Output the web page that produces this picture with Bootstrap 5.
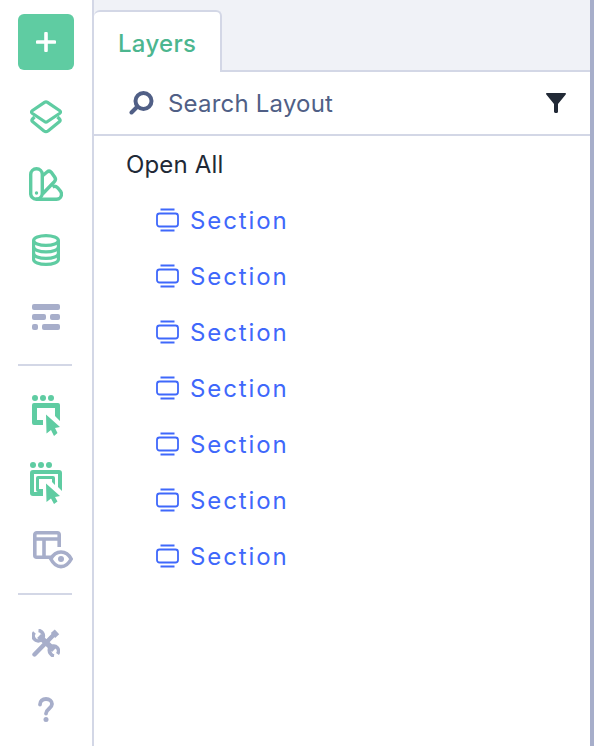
<!doctype html>
<html lang="en">
<head>
<meta charset="utf-8">
<title>Layers</title>
<link href="https://cdn.jsdelivr.net/npm/bootstrap@5.3.0/dist/css/bootstrap.min.css" rel="stylesheet">
<style>
html,body{height:100%;overflow:hidden}
body{font-family:Inter,"Liberation Sans",sans-serif;background:#fff}
.shell{width:594px;height:746px}
.rail{width:94px;flex:none;border-right:2px solid #d3d7e6;padding:14px 20px 0 18px}
.add-tile{width:56px;height:56px;background:#5fcca2;border-radius:6px;margin-bottom:13.67px;border:0;padding:0}
.rail-slot{height:66.67px;width:56px}
.rail-rule{width:54px;height:2px;background:#d3d7e6;flex:none}
.rule-a{margin:13.7px 0 16.7px}
.rule-b{margin:10.7px 0 15px}
.slot-low{height:66px}
.eye-shift{margin:2px 0 0 14px}
.cursor-mark{paint-order:stroke;stroke:#fff;stroke-width:3px;stroke-linejoin:round}
.pane{border-right:4px solid #a7aeca}
.tabstrip{height:72px;background:#f0f2f7;border-bottom:2px solid #d3d7e6}
.tab-active{width:128px;height:62px;margin-top:10px;background:#fff;border:2px solid #d3d7e6;border-bottom:0;border-left:0;border-radius:6px 6px 0 0;margin-bottom:-2px;color:#4cb68f;font-size:24px;letter-spacing:.3px;font-weight:500;padding-left:24px;line-height:64px}
.searchbar{height:64px;border-bottom:2px solid #d3d7e6;padding:0 24px 0 35px}
.search-label{font-size:24px;letter-spacing:.2px;color:#505f86;margin-left:13px;line-height:1;padding-top:2px}
.open-all{font-size:24px;letter-spacing:.15px;color:#212936;margin:14px 0 0 32px;line-height:30px;height:42px}
.layer-row{height:56px;padding-left:62px;color:#3f68fb;font-size:24px;letter-spacing:1.9px}
.layer-row svg{margin-right:11px}
.row-text{padding-top:1px}
</style>
</head>
<body>
<div class="shell d-flex">
  <aside class="rail d-flex flex-column">
    <button class="add-tile d-flex align-items-center justify-content-center" aria-label="Add">
      <svg width="20" height="20" viewBox="0 0 20 20"><path d="M10 1.500v17M1.500 10h17" stroke="#fff" stroke-width="3.600" stroke-linecap="round"/></svg>
    </button>
    <div class="rail-slot d-flex align-items-center justify-content-center">
      <svg width="32" height="34" viewBox="0 0 32 34" fill="none" stroke="#5fcca2" stroke-width="3.200" stroke-linejoin="round"><path d="M14.500 2.400c1-.7 2-.7 3 0L29.500 10.500c1.300 1 1.300 2 0 3L17.500 21.500c-1 .7-2 .7-3 0L2.500 13.500c-1.300-1-1.300-2 0-3z"/><path d="M4.500 17 2.500 19c-1 1-.8 2 .2 2.800L14 31c1.300.9 2.700.9 4 0l11.300-9.200c1-.8 1.200-1.800.2-2.800L27.500 17"/></svg>
    </div>
    <div class="rail-slot d-flex align-items-center justify-content-center">
      <svg width="34" height="34" viewBox="0 0 34 34" fill="none" stroke="#5fcca2" stroke-width="3.400" stroke-linejoin="round"><path d="M1.700 7.500a5.800 5.800 0 0 1 11.600 0V26a6.300 6.300 0 0 1-6 6.300A5.800 5.800 0 0 1 1.700 26z"/><path d="M13.300 9 18 5c1.500-1.200 3.200-1 4.300.3l3.500 5c1 1.500.8 3.200-.5 4.500L13.500 27"/><path d="M7 32.300h20.500c3.200 0 5-2.800 5-5.200 0-2-1-3.300-2-4.200l-2-2.200c-1.500-1.600-3.500-1.700-5-.7"/><circle cx="7.500" cy="26" r="1.700" fill="#5fcca2" stroke="none"/></svg>
    </div>
    <div class="rail-slot d-flex align-items-center justify-content-center">
      <svg width="28" height="32" viewBox="0 0 28 32" fill="none" stroke="#5fcca2" stroke-width="3.200"><ellipse cx="14" cy="6.500" rx="12.400" ry="4.900"/><path d="M1.600 6.500v19c0 2.700 5.500 4.900 12.400 4.900s12.400-2.200 12.400-4.900v-19"/><path d="M1.600 13c0 2.700 5.500 4.900 12.400 4.900S26.400 15.700 26.400 13M1.600 19.500c0 2.700 5.500 4.900 12.400 4.900s12.400-2.200 12.400-4.900"/></svg>
    </div>
    <div class="rail-slot d-flex align-items-center justify-content-center">
      <svg width="28" height="26" viewBox="0 0 28 26" fill="#a7aeca"><rect x="0" y="0" width="28" height="6" rx="2"/><rect x="0" y="10" width="14" height="6" rx="2"/><rect x="18" y="10" width="10" height="6" rx="2"/><rect x="0" y="20" width="6" height="6" rx="2"/><rect x="10" y="20" width="18" height="6" rx="2"/></svg>
    </div>
    <div class="rail-rule rule-a"></div>
    <div class="rail-slot d-flex align-items-center justify-content-center">
      <svg width="28" height="41" viewBox="0 0 28 41"><g fill="#5fcca2"><circle cx="3" cy="3" r="3"/><circle cx="11" cy="3" r="3"/><circle cx="19" cy="3" r="3"/><path d="M2 8h24a2 2 0 0 1 2 2v16l-5-5v-8H5v12h6v5H2a2 2 0 0 1-2-2V10a2 2 0 0 1 2-2z"/><path class="cursor-mark" d="M14 19.500 28 32l-5 1 2.500 5-3.500 3-3-6-4.500 3.500z"/></g></svg>
    </div>
    <div class="rail-slot d-flex align-items-center justify-content-center">
      <svg width="32" height="42" viewBox="0 0 32 42"><g fill="#5fcca2"><circle cx="3" cy="3" r="3"/><circle cx="11" cy="3" r="3"/><circle cx="19" cy="3" r="3"/><path d="M3 8h26a3 3 0 0 1 3 3v18l-4-4V12H4v18h9v4H3a3 3 0 0 1-3-3V11a3 3 0 0 1 3-3z"/><path d="M8 14h15a2 2 0 0 1 2 2v7l-3-3v-3H9v10h4v3H8a2 2 0 0 1-2-2V16a2 2 0 0 1 2-2z"/><path class="cursor-mark" d="M16 21.500 30 34l-5 1 2.500 4.500-3.500 2.500-3-5.500-4.500 3.500z"/></g></svg>
    </div>
    <div class="rail-slot d-flex align-items-center justify-content-center">
      <svg class="eye-shift" width="40" height="38" viewBox="0 0 40 38" fill="none" stroke="#a7aeca" stroke-width="3.600"><path d="M18 26.200H3.800a2 2 0 0 1-2-2V3.800a2 2 0 0 1 2-2h20.400a2 2 0 0 1 2 2V16M1.800 8H26.200M11 8V26"/><path d="M17.800 28c2.500-4.800 6-7 10.200-7s7.700 2.200 10.200 7c-2.500 4.800-6 7.600-10.200 7.600S20.300 32.800 17.800 28z" fill="#fff"/><circle cx="28" cy="28" r="3" fill="#a7aeca" stroke="none"/></svg>
    </div>
    <div class="rail-rule rule-b"></div>
    <div class="rail-slot slot-low d-flex align-items-center justify-content-center">
      <svg width="28" height="28" viewBox="0 0 28 28" fill="none" stroke="#a7aeca"><path d="M2.500 25.500 22 5.500" stroke-width="4.400" stroke-linecap="round"/><path d="M21 6.500 25 2.800" stroke-width="6.500"/><path d="M7 7 22 21" stroke-width="5.600"/><path d="M2.500 3.500a5 5 0 0 0 6.500 7.500 5 5 0 0 0 1.500-7A5 5 0 0 0 6.500 1.500" stroke-width="3.600"/><path d="M25.500 25a5 5 0 0 0-7-7 5 5 0 0 0 0 6.500 5 5 0 0 0 3.500 2.500" stroke-width="3.600"/></svg>
    </div>
    <div class="rail-slot slot-low d-flex align-items-center justify-content-center">
      <svg width="16" height="25" viewBox="0 0 16 25" fill="none"><path d="M2 7.500C2 4 4.500 2 8 2s6 2 6 5c0 4.500-6 5-6 9.500" stroke="#a7aeca" stroke-width="3.800" stroke-linecap="round"/><circle cx="8" cy="22.500" r="2.500" fill="#a7aeca"/></svg>
    </div>
  </aside>
  <main class="pane flex-grow-1 d-flex flex-column">
    <div class="tabstrip d-flex"><div class="tab-active">Layers</div></div>
    <div class="searchbar d-flex align-items-center justify-content-between">
      <div class="d-flex align-items-center">
        <svg width="26" height="24" viewBox="0 0 26 24" fill="none"><circle cx="14.500" cy="10" r="8" stroke="#505f86" stroke-width="4"/><path d="M2.500 21.500 8 16" stroke="#505f86" stroke-width="4" stroke-linecap="round"/></svg>
        <span class="search-label">Search Layout</span>
      </div>
      <svg width="20" height="20" viewBox="0 0 20 20" fill="#212936"><path d="M.8 0h18.400c.8 0 1 .8.500 1.400L12 11v7.500c0 1-.8 1.500-1.800 1.500S8 19.500 8 18.500V11L.3 1.400C-.2.800 0 0 .8 0z"/></svg>
    </div>
    <div class="open-all">Open All</div>
    <div class="layer-row d-flex align-items-center"><svg width="23" height="24" viewBox="0 0 23 24" fill="none" stroke="#3f68fb" stroke-width="1.800"><rect x="1" y="5.500" width="21" height="13" rx="2.500"/><path d="M4.500 1.500h14M4.500 22.500h14"/></svg><span class="row-text">Section</span></div>
    <div class="layer-row d-flex align-items-center"><svg width="23" height="24" viewBox="0 0 23 24" fill="none" stroke="#3f68fb" stroke-width="1.800"><rect x="1" y="5.500" width="21" height="13" rx="2.500"/><path d="M4.500 1.500h14M4.500 22.500h14"/></svg><span class="row-text">Section</span></div>
    <div class="layer-row d-flex align-items-center"><svg width="23" height="24" viewBox="0 0 23 24" fill="none" stroke="#3f68fb" stroke-width="1.800"><rect x="1" y="5.500" width="21" height="13" rx="2.500"/><path d="M4.500 1.500h14M4.500 22.500h14"/></svg><span class="row-text">Section</span></div>
    <div class="layer-row d-flex align-items-center"><svg width="23" height="24" viewBox="0 0 23 24" fill="none" stroke="#3f68fb" stroke-width="1.800"><rect x="1" y="5.500" width="21" height="13" rx="2.500"/><path d="M4.500 1.500h14M4.500 22.500h14"/></svg><span class="row-text">Section</span></div>
    <div class="layer-row d-flex align-items-center"><svg width="23" height="24" viewBox="0 0 23 24" fill="none" stroke="#3f68fb" stroke-width="1.800"><rect x="1" y="5.500" width="21" height="13" rx="2.500"/><path d="M4.500 1.500h14M4.500 22.500h14"/></svg><span class="row-text">Section</span></div>
    <div class="layer-row d-flex align-items-center"><svg width="23" height="24" viewBox="0 0 23 24" fill="none" stroke="#3f68fb" stroke-width="1.800"><rect x="1" y="5.500" width="21" height="13" rx="2.500"/><path d="M4.500 1.500h14M4.500 22.500h14"/></svg><span class="row-text">Section</span></div>
    <div class="layer-row d-flex align-items-center"><svg width="23" height="24" viewBox="0 0 23 24" fill="none" stroke="#3f68fb" stroke-width="1.800"><rect x="1" y="5.500" width="21" height="13" rx="2.500"/><path d="M4.500 1.500h14M4.500 22.500h14"/></svg><span class="row-text">Section</span></div>
  </main>
</div>
<script src="https://cdn.jsdelivr.net/npm/bootstrap@5.3.0/dist/js/bootstrap.bundle.min.js"></script>
</body>
</html>
